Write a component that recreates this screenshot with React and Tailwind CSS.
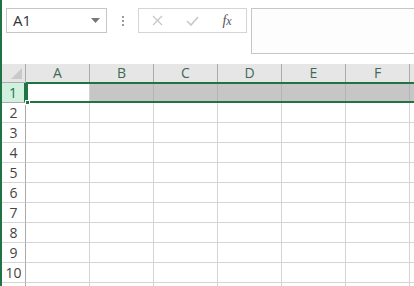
import React from "react";

const cols = ["A", "B", "C", "D", "E", "F", ""];
const rows = [1, 2, 3, 4, 5, 6, 7, 8, 9, 10, ""];

export default function App() {
  return (
    <div
      className="flex h-[286px] w-[414px] overflow-hidden bg-white"
      style={{ fontFamily: '"Open Sans", "Noto Sans", sans-serif' }}
    >
      <div className="w-[2px] shrink-0 bg-[#217346]" />
      <div className="flex min-w-0 flex-1 flex-col">
        {/* toolbar */}
        <div className="flex h-[64px] shrink-0 items-start pt-[8px]">
          <div className="ml-[4px] flex h-[25px] w-[101px] items-center justify-between border border-[#c6c6c6] bg-white pl-[6px] pr-[6px]">
            <span className="text-[15px] leading-none text-[#333]">A1</span>
            <svg width="9" height="5" viewBox="0 0 9 5">
              <path d="M0 0 L9 0 L4.5 5 Z" fill="#777" />
            </svg>
          </div>
          <div className="flex h-[25px] w-[31px] flex-col items-center justify-center gap-[2px]">
            <div className="h-[2px] w-[2px] bg-[#9a9a9a]" />
            <div className="h-[2px] w-[2px] bg-[#9a9a9a]" />
            <div className="h-[2px] w-[2px] bg-[#9a9a9a]" />
          </div>
          <div className="flex h-[25px] w-[109px] items-center border border-[#d4d4d4] bg-white">
            <div className="flex w-[36px] justify-center">
              <svg width="11" height="11" viewBox="0 0 11 11">
                <path d="M1 1 L10 10 M10 1 L1 10" stroke="#c8c8c8" strokeWidth="1.3" />
              </svg>
            </div>
            <div className="flex w-[34px] justify-center">
              <svg width="13" height="10" viewBox="0 0 13 10">
                <path d="M1 5 L5 9 L12 1" stroke="#c8c8c8" strokeWidth="1.6" fill="none" />
              </svg>
            </div>
            <div className="flex w-[36px] justify-center">
              <span
                className="text-[14px] italic leading-none text-[#555]"
                style={{ fontFamily: '"Liberation Serif", serif' }}
              >
                f<span className="text-[12px]">x</span>
              </span>
            </div>
          </div>
          <div className="ml-[4px] h-[46px] flex-1 border-y border-l border-[#c6c6c6] bg-[#fdfdfd]" />
        </div>

        {/* grid */}
        <div className="relative flex-1">
          <div className="grid grid-cols-[24px_64px_64px_64px_64px_64px_64px_64px] grid-rows-[19px_repeat(11,20px)]">
            {/* corner */}
            <div className="relative border-b border-r border-[#ababab] bg-[#e6e6e6]">
              <svg className="absolute bottom-[3px] right-[3px]" width="11" height="11" viewBox="0 0 11 11">
                <path d="M11 0 L11 11 L0 11 Z" fill="#c9c9c9" />
              </svg>
            </div>
            {cols.map((c, i) => (
              <div
                key={i}
                className="flex items-center justify-center border-b border-r border-[#ababab] bg-[#e6e6e6] text-[14px] leading-none text-[#3e6a55]"
              >
                {c}
              </div>
            ))}
            {rows.map((r, ri) => (
              <React.Fragment key={ri}>
                <div
                  className={
                    r === 1
                      ? "flex items-center justify-center border-b border-r-2 border-b-[#ababab] border-r-[#217346] bg-[#d2f0df] text-[14px] leading-none text-[#217346]"
                      : "flex items-center justify-center border-b border-r border-[#d4d4d4] border-r-[#ababab] bg-white text-[14px] leading-none text-[#444]"
                  }
                >
                  {r}
                </div>
                {cols.map((c, i) => (
                  <div
                    key={i}
                    className={
                      r === 1 && i > 0
                        ? "border-b border-r border-[#b4b4b4] bg-[#c6c6c6]"
                        : "border-b border-r border-[#d4d4d4] bg-white"
                    }
                  />
                ))}
              </React.Fragment>
            ))}
          </div>
          {/* selection border */}
          <div className="pointer-events-none absolute left-[24px] top-[18px] h-[21px] w-[400px] border-2 border-r-0 border-[#217346]" />
          <div className="pointer-events-none absolute left-[23px] top-[36px] h-[5px] w-[5px] border border-white bg-[#217346]" />
        </div>
      </div>
    </div>
  );
}
